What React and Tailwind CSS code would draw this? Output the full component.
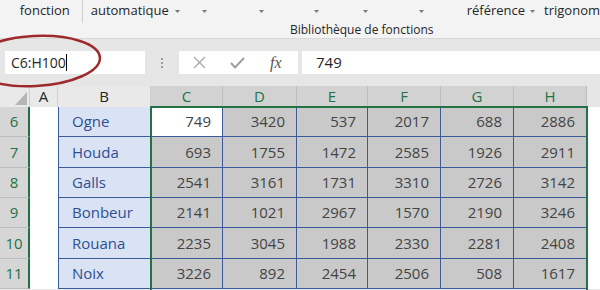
import React from 'react'

const cols = [
  { l: 'C', w: 'w-[72px]' },
  { l: 'D', w: 'w-[74px]' },
  { l: 'E', w: 'w-[71px]' },
  { l: 'F', w: 'w-[73px]' },
  { l: 'G', w: 'w-[73px]' },
  { l: 'H', w: 'w-[73px]' },
]

const rows = [
  { n: 6, h: 'h-[30px]', name: 'Ogne', v: [749, 3420, 537, 2017, 688, 2886] },
  { n: 7, h: 'h-[31px]', name: 'Houda', v: [693, 1755, 1472, 2585, 1926, 2911] },
  { n: 8, h: 'h-[30px]', name: 'Galls', v: [2541, 3161, 1731, 3310, 2726, 3142] },
  { n: 9, h: 'h-[30px]', name: 'Bonbeur', v: [2141, 1021, 2967, 1570, 2190, 3246] },
  { n: 10, h: 'h-[31px]', name: 'Rouana', v: [2235, 3045, 1988, 2330, 2281, 2408] },
  { n: 11, h: 'h-[30px]', name: 'Noix', v: [3226, 892, 2454, 2506, 508, 1617] },
]

const Caret = () => (
  <svg width="5" height="3" viewBox="0 0 5 3" className="inline-block">
    <path d="M0 0h5L2.5 3z" fill="#777" />
  </svg>
)

const App = () => {
  return (
    <div className="relative w-[600px] h-[290px] overflow-hidden bg-[#e6e6e6] font-['Open_Sans',sans-serif] text-[#262626]">
      {/* ribbon */}
      <div className="h-[39px] bg-[#f3f3f3] border-b border-[#d8d8d8]">
        <div className="flex items-center h-[22px] text-[13px]">
          <span className="w-[20px]" />
          <span className="w-[63px]">fonction</span>
          <span className="w-px h-[23px] self-start bg-[#d0d0d0]" />
          <span className="w-[8px]" />
          <span className="w-[84px] flex items-center">automatique<span className="ml-[6px] flex"><Caret /></span></span>
          <span className="w-[33px] flex justify-end"><Caret /></span>
          <span className="w-[58px] flex justify-end"><Caret /></span>
          <span className="w-[55px] flex justify-end"><Caret /></span>
          <span className="w-[50px] flex justify-end"><Caret /></span>
          <span className="w-[57px] flex justify-end"><Caret /></span>
          <span className="w-[43px]" />
          <span className="flex items-center">référence<span className="ml-[5px] flex"><Caret /></span></span>
          <span className="ml-[9px]">trigonom</span>
        </div>
        <div className="pl-[290px] text-[12px] leading-[16px]">Bibliothèque de fonctions</div>
      </div>

      {/* formula bar */}
      <div className="flex items-start h-[47px] pt-[12px]">
        <div className="ml-[5px] w-[140px] h-[23px] bg-white flex items-center pl-[6px] text-[14px]">
          C6:H100<span className="w-px h-[17px] bg-black" />
        </div>
        <div className="w-[34px] h-[23px] flex flex-col items-center justify-center gap-[2px]">
          <span className="w-[2px] h-[2px] bg-[#9a9a9a]" />
          <span className="w-[2px] h-[2px] bg-[#9a9a9a]" />
          <span className="w-[2px] h-[2px] bg-[#9a9a9a]" />
        </div>
        <div className="w-[119px] h-[23px] bg-white flex items-center">
          <svg width="13" height="13" viewBox="0 0 13 13" className="ml-[14px]">
            <path d="M1 1l11 11M12 1L1 12" stroke="#a8a8a8" strokeWidth="1.3" />
          </svg>
          <svg width="15" height="12" viewBox="0 0 15 12" className="ml-[24px]">
            <path d="M1 6l4 4.5L14 1" stroke="#a0a0a0" strokeWidth="2" fill="none" />
          </svg>
          <span className="ml-[25px] italic text-[16px] text-[#555] font-['Liberation_Serif',serif]">fx</span>
        </div>
        <div className="ml-[4px] flex-1 h-[23px] bg-white flex items-center pl-[14px] text-[15px]">749</div>
      </div>

      {/* column headers */}
      <div className="flex h-[21px] text-[15px] leading-[20px]">
        <div className="relative w-[30px] bg-[#e9e9e9] border-r border-[#d0d0d0]">
          <svg width="12" height="13" viewBox="0 0 12 13" className="absolute right-[2px] bottom-[2px]">
            <path d="M12 0v13H0z" fill="#b5b5b5" />
          </svg>
        </div>
        <div className="w-[28px] bg-[#e9e9e9] border-r border-[#d0d0d0] text-center">A</div>
        <div className="w-[93px] bg-[#e9e9e9] border-r border-[#d0d0d0] text-center">B</div>
        {cols.map(c => (
          <div key={c.l} className={`${c.w} bg-[#d2d2d2] border-r border-[#bdbdbd] text-center text-[#217346]`}>{c.l}</div>
        ))}
        <div className="flex-1 bg-[#e6e6e6]" />
      </div>

      {/* rows */}
      {rows.map((r, i) => (
        <div key={r.n} className={`flex ${r.h} text-[15px]`}>
          <div className="w-[30px] bg-[#d6d6d6] border-b border-[#bfbfbf] border-r-2 border-r-[#217346] flex items-center justify-center text-[#217346]">{r.n}</div>
          <div className="w-[28px] bg-white" />
          <div className="w-[93px] bg-[#dae3f3] border-l border-b border-[#3d5a99] flex items-center pl-[13px] text-[#2e4f93]">{r.name}</div>
          {cols.map((c, j) => (
            <div
              key={c.l}
              className={`${c.w} ${i === 0 && j === 0 ? 'bg-white' : 'bg-[#c9c9c9]'} border-r border-b border-[#3d5a99] flex items-center justify-end pr-[11px] text-[#444]`}
            >
              {r.v[j]}
            </div>
          ))}
          <div className="flex-1 bg-white" />
        </div>
      ))}

      {/* selection */}
      <div className="absolute left-[150px] top-[106px] w-[438px] h-[186px] border-2 border-[#217346] pointer-events-none" />

      {/* red ellipse */}
      <svg width="600" height="290" className="absolute left-0 top-0 pointer-events-none">
        <ellipse cx="35" cy="61" rx="65" ry="25" fill="none" stroke="#9e2a2e" strokeWidth="2.5" transform="rotate(-3 35 61)" />
      </svg>
    </div>
  )
}

export default App
